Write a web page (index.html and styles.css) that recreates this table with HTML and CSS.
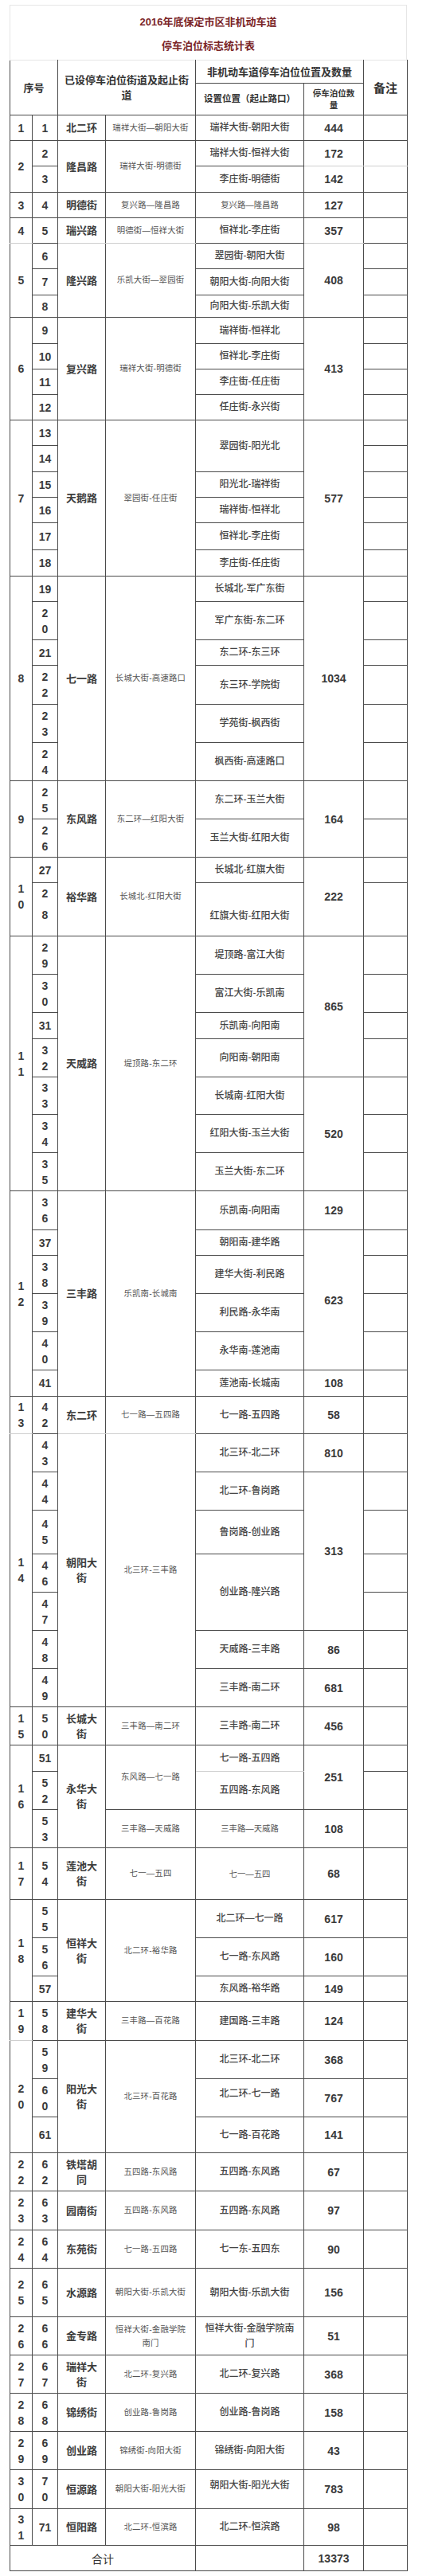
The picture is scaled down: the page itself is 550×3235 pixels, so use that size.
FILE: index.html
```
<!DOCTYPE html>
<html lang="zh-CN">
<head>
<meta charset="utf-8">
<title>2016年底保定市区非机动车道停车泊位标志统计表</title>
<link rel="stylesheet" href="styles.css">
</head>
<body>
<div class="page">
  <div class="title">
    <div class="title-line">2016年底保定市区非机动车道</div>
    <div class="title-line">停车泊位标志统计表</div>
  </div>
  <table class="stats">
    <colgroup>
      <col class="w1"><col class="w2"><col class="w3"><col class="w4"><col class="w5"><col class="w6"><col class="w7">
    </colgroup>
    <thead>
      <tr class="hr1">
        <th colspan="2" rowspan="2" class="hd">序号</th>
        <th colspan="2" rowspan="2" class="hd two">已设停车泊位街道及起止街<br>道</th>
        <th colspan="2" class="hd">非机动车道停车泊位位置及数量</th>
        <th rowspan="2" class="hd big">备注</th>
      </tr>
      <tr class="hr2">
        <th class="hd sub">设置位置（起止路口）</th>
        <th class="hd tiny">停车泊位数<br>量</th>
      </tr>
    </thead>
    <tbody>
      <tr class="h32"><td class="g">1</td><td class="s">1</td><td class="n">北二环</td><td class="r">瑞祥大街—朝阳大街</td><td class="l">瑞祥大街-朝阳大街</td><td class="q">444</td><td class="e"></td></tr>
      <tr class="h32"><td class="g" rowspan="2">2</td><td class="s">2</td><td class="n" rowspan="2">隆昌路</td><td class="r" rowspan="2">瑞祥大街-明德街</td><td class="l">瑞祥大街-恒祥大街</td><td class="q lb">172</td><td class="e lb"></td></tr>
      <tr class="h33"><td class="s">3</td><td class="l">李庄街-明德街</td><td class="q">142</td><td class="e"></td></tr>
      <tr class="h32"><td class="g">3</td><td class="s">4</td><td class="n">明德街</td><td class="r">复兴路—隆昌路</td><td class="l sm">复兴路—隆昌路</td><td class="q">127</td><td class="e"></td></tr>
      <tr class="h32"><td class="g lb">4</td><td class="s">5</td><td class="n lb">瑞兴路</td><td class="r lb">明德街—恒祥大街</td><td class="l">恒祥北-李庄街</td><td class="q lb">357</td><td class="e"></td></tr>
      <tr class="h32"><td class="g" rowspan="3">5</td><td class="s">6</td><td class="n" rowspan="3">隆兴路</td><td class="r" rowspan="3">乐凯大街—翠园街</td><td class="l">翠园街-朝阳大街</td><td class="q" rowspan="3">408</td><td class="e"></td></tr>
      <tr class="h33"><td class="s">7</td><td class="l">朝阳大街-向阳大街</td><td class="e"></td></tr>
      <tr class="h28"><td class="s">8</td><td class="l">向阳大街-乐凯大街</td><td class="e"></td></tr>
      <tr class="h33"><td class="g" rowspan="4">6</td><td class="s">9</td><td class="n" rowspan="4">复兴路</td><td class="r" rowspan="4">瑞祥大街-明德街</td><td class="l">瑞祥街-恒祥北</td><td class="q" rowspan="4">413</td><td class="e"></td></tr>
      <tr class="h32"><td class="s">10</td><td class="l">恒祥北-李庄街</td><td class="e"></td></tr>
      <tr class="h32"><td class="s">11</td><td class="l">李庄街-任庄街</td><td class="e"></td></tr>
      <tr class="h32"><td class="s">12</td><td class="l">任庄街-永兴街</td><td class="e"></td></tr>
      <tr class="h32"><td class="g" rowspan="6">7</td><td class="s">13</td><td class="n" rowspan="6">天鹅路</td><td class="r" rowspan="6">翠园街-任庄街</td><td class="l" rowspan="2">翠园街-阳光北</td><td class="q" rowspan="6">577</td><td class="e"></td></tr>
      <tr class="h33"><td class="s">14</td><td class="e"></td></tr>
      <tr class="h32"><td class="s">15</td><td class="l">阳光北-瑞祥街</td><td class="e"></td></tr>
      <tr class="h32"><td class="s">16</td><td class="l">瑞祥街-恒祥北</td><td class="e"></td></tr>
      <tr class="h34"><td class="s">17</td><td class="l">恒祥北-李庄街</td><td class="e"></td></tr>
      <tr class="h33"><td class="s">18</td><td class="l">李庄街-任庄街</td><td class="e"></td></tr>
      <tr class="h32"><td class="g" rowspan="6">8</td><td class="s">19</td><td class="n" rowspan="6">七一路</td><td class="r" rowspan="6">长城大街-高速路口</td><td class="l">长城北-军广东街</td><td class="q" rowspan="6">1034</td><td class="e"></td></tr>
      <tr class="h48"><td class="s">2<br>0</td><td class="l">军广东街-东二环</td><td class="e"></td></tr>
      <tr class="h32"><td class="s">21</td><td class="l">东二环-东三环</td><td class="e"></td></tr>
      <tr class="h49"><td class="s">2<br>2</td><td class="l">东三环-学院街</td><td class="e"></td></tr>
      <tr class="h48"><td class="s">2<br>3</td><td class="l">学苑街-枫西街</td><td class="e"></td></tr>
      <tr class="h48"><td class="s">2<br>4</td><td class="l">枫西街-高速路口</td><td class="e"></td></tr>
      <tr class="h48"><td class="g" rowspan="2">9</td><td class="s">2<br>5</td><td class="n" rowspan="2">东风路</td><td class="r" rowspan="2">东二环—红阳大街</td><td class="l">东二环-玉兰大街</td><td class="q" rowspan="2">164</td><td class="e"></td></tr>
      <tr class="h48"><td class="s">2<br>6</td><td class="l">玉兰大街-红阳大街</td><td class="e"></td></tr>
      <tr class="h32"><td class="g" rowspan="2">1<br>0</td><td class="s">27</td><td class="n" rowspan="2">裕华路</td><td class="r" rowspan="2">长城北-红阳大街</td><td class="l">长城北-红旗大街</td><td class="q" rowspan="2">222</td><td class="e"></td></tr>
      <tr class="h67"><td class="s tall">2<br>8</td><td class="l low">红旗大街-红阳大街</td><td class="e"></td></tr>
      <tr class="h48"><td class="g" rowspan="7">1<br>1</td><td class="s">2<br>9</td><td class="n" rowspan="7">天威路</td><td class="r" rowspan="7">堤顶路-东二环</td><td class="l">堤顶路-富江大街</td><td class="q" rowspan="4">865</td><td class="e"></td></tr>
      <tr class="h48"><td class="s">3<br>0</td><td class="l">富江大街-乐凯南</td><td class="e"></td></tr>
      <tr class="h33"><td class="s">31</td><td class="l">乐凯南-向阳南</td><td class="e"></td></tr>
      <tr class="h48"><td class="s">3<br>2</td><td class="l">向阳南-朝阳南</td><td class="e"></td></tr>
      <tr class="h47"><td class="s">3<br>3</td><td class="l">长城南-红阳大街</td><td class="q" rowspan="3">520</td><td class="e"></td></tr>
      <tr class="h48"><td class="s">3<br>4</td><td class="l">红阳大街-玉兰大街</td><td class="e"></td></tr>
      <tr class="h48"><td class="s">3<br>5</td><td class="l">玉兰大街-东二环</td><td class="e"></td></tr>
      <tr class="h49"><td class="g" rowspan="6">1<br>2</td><td class="s">3<br>6</td><td class="n" rowspan="6">三丰路</td><td class="r" rowspan="6">乐凯南-长城南</td><td class="l">乐凯南-向阳南</td><td class="q">129</td><td class="e"></td></tr>
      <tr class="h32"><td class="s">37</td><td class="l">朝阳南-建华路</td><td class="q" rowspan="4">623</td><td class="e"></td></tr>
      <tr class="h48"><td class="s">3<br>8</td><td class="l">建华大街-利民路</td><td class="e"></td></tr>
      <tr class="h48"><td class="s">3<br>9</td><td class="l">利民路-永华南</td><td class="e"></td></tr>
      <tr class="h48"><td class="s">4<br>0</td><td class="l">永华南-莲池南</td><td class="e"></td></tr>
      <tr class="h33"><td class="s">41</td><td class="l">莲池南-长城南</td><td class="q">108</td><td class="e"></td></tr>
      <tr class="h47"><td class="g lb">1<br>3</td><td class="s">4<br>2</td><td class="n lb">东二环</td><td class="r lb">七一路—五四路</td><td class="l">七一路-五四路</td><td class="q">58</td><td class="e"></td></tr>
      <tr class="h48"><td class="g" rowspan="7">1<br>4</td><td class="s">4<br>3</td><td class="n" rowspan="7">朝阳大<br>街</td><td class="r" rowspan="7">北三环-三丰路</td><td class="l">北三环-北二环</td><td class="q">810</td><td class="e"></td></tr>
      <tr class="h48"><td class="s">4<br>4</td><td class="l">北二环-鲁岗路</td><td class="q" rowspan="4">313</td><td class="e"></td></tr>
      <tr class="h55"><td class="s">4<br>5</td><td class="l">鲁岗路-创业路</td><td class="e"></td></tr>
      <tr class="h48"><td class="s">4<br>6</td><td class="l" rowspan="2">创业路-隆兴路</td><td class="e"></td></tr>
      <tr class="h48"><td class="s">4<br>7</td><td class="e"></td></tr>
      <tr class="h48"><td class="s">4<br>8</td><td class="l">天威路-三丰路</td><td class="q">86</td><td class="e"></td></tr>
      <tr class="h48"><td class="s">4<br>9</td><td class="l">三丰路-南二环</td><td class="q">681</td><td class="e"></td></tr>
      <tr class="h48"><td class="g">1<br>5</td><td class="s">5<br>0</td><td class="n">长城大<br>街</td><td class="r">三丰路—南二环</td><td class="l">三丰路-南二环</td><td class="q">456</td><td class="e"></td></tr>
      <tr class="h33"><td class="g" rowspan="3">1<br>6</td><td class="s">51</td><td class="n" rowspan="3">永华大<br>街</td><td class="r" rowspan="2">东风路—七一路</td><td class="l lb">七一路-五四路</td><td class="q" rowspan="2">251</td><td class="e"></td></tr>
      <tr class="h48"><td class="s">5<br>2</td><td class="l">五四路-东风路</td><td class="e"></td></tr>
      <tr class="h48"><td class="s">5<br>3</td><td class="r">三丰路—天威路</td><td class="l sm">三丰路—天威路</td><td class="q">108</td><td class="e"></td></tr>
      <tr class="h65"><td class="g">1<br>7</td><td class="s">5<br>4</td><td class="n">莲池大<br>街</td><td class="r">七一—五四</td><td class="l sm">七一—五四</td><td class="q">68</td><td class="e"></td></tr>
      <tr class="h48"><td class="g" rowspan="3">1<br>8</td><td class="s">5<br>5</td><td class="n" rowspan="3">恒祥大<br>街</td><td class="r" rowspan="3">北二环-裕华路</td><td class="l">北二环—七一路</td><td class="q">617</td><td class="e"></td></tr>
      <tr class="h48"><td class="s">5<br>6</td><td class="l">七一路-东风路</td><td class="q">160</td><td class="e"></td></tr>
      <tr class="h32"><td class="s">57</td><td class="l">东风路-裕华路</td><td class="q">149</td><td class="e"></td></tr>
      <tr class="h49"><td class="g lb">1<br>9</td><td class="s">5<br>8</td><td class="n">建华大<br>街</td><td class="r">三丰路—百花路</td><td class="l">建国路-三丰路</td><td class="q">124</td><td class="e"></td></tr>
      <tr class="h48"><td class="g" rowspan="3">2<br>0</td><td class="s">5<br>9</td><td class="n" rowspan="3">阳光大<br>街</td><td class="r" rowspan="3">北三环-百花路</td><td class="l">北三环-北二环</td><td class="q">368</td><td class="e"></td></tr>
      <tr class="h48"><td class="s">6<br>0</td><td class="l up">北二环-七一路</td><td class="q">767</td><td class="e"></td></tr>
      <tr class="h45"><td class="s">61</td><td class="l">七一路-百花路</td><td class="q">141</td><td class="e"></td></tr>
      <tr class="h48"><td class="g">2<br>2</td><td class="s">6<br>2</td><td class="n">铁塔胡<br>同</td><td class="r">五四路-东风路</td><td class="l">五四路-东风路</td><td class="q">67</td><td class="e"></td></tr>
      <tr class="h49"><td class="g">2<br>3</td><td class="s">6<br>3</td><td class="n">园南街</td><td class="r">五四路-东风路</td><td class="l">五四路-东风路</td><td class="q">97</td><td class="e"></td></tr>
      <tr class="h48"><td class="g">2<br>4</td><td class="s">6<br>4</td><td class="n">东苑街</td><td class="r">七一路-五四路</td><td class="l">七一东-五四东</td><td class="q">90</td><td class="e"></td></tr>
      <tr class="h61"><td class="g">2<br>5</td><td class="s">6<br>5</td><td class="n">水源路</td><td class="r">朝阳大街-乐凯大街</td><td class="l">朝阳大街-乐凯大街</td><td class="q">156</td><td class="e"></td></tr>
      <tr class="h48"><td class="g">2<br>6</td><td class="s">6<br>6</td><td class="n">金专路</td><td class="r wrap">恒祥大街-金融学院<br>南门</td><td class="l wrap">恒祥大街-金融学院南<br>门</td><td class="q">51</td><td class="e"></td></tr>
      <tr class="h48"><td class="g">2<br>7</td><td class="s">6<br>7</td><td class="n">瑞祥大<br>街</td><td class="r">北二环-复兴路</td><td class="l">北二环-复兴路</td><td class="q">368</td><td class="e"></td></tr>
      <tr class="h48"><td class="g">2<br>8</td><td class="s">6<br>8</td><td class="n">锦绣街</td><td class="r">创业路-鲁岗路</td><td class="l">创业路-鲁岗路</td><td class="q">158</td><td class="e"></td></tr>
      <tr class="h48"><td class="g">2<br>9</td><td class="s">6<br>9</td><td class="n">创业路</td><td class="r">锦绣街-向阳大街</td><td class="l">锦绣街-向阳大街</td><td class="q">43</td><td class="e"></td></tr>
      <tr class="h49"><td class="g">3<br>0</td><td class="s">7<br>0</td><td class="n">恒源路</td><td class="r">朝阳大街-阳光大街</td><td class="l up">朝阳大街-阳光大街</td><td class="q">783</td><td class="e"></td></tr>
      <tr class="h46"><td class="g">3<br>1</td><td class="s">71</td><td class="n">恒阳路</td><td class="r">北二环-恒滨路</td><td class="l">北二环-恒滨路</td><td class="q">98</td><td class="e"></td></tr>
      <tr class="h32"><td class="sum" colspan="4">合计</td><td class="l"></td><td class="q">13373</td><td class="e"></td></tr>
    </tbody>
  </table>
</div>
</body>
</html>
```

FILE: styles.css
```
* {
  box-sizing: border-box;
}

html,
body {
  margin: 0;
  padding: 0;
  background: #ffffff;
}

body {
  font-family: "Liberation Sans", "Noto Sans CJK SC", sans-serif;
  color: #333333;
}

.page {
  padding: 6px 0 0 12px;
  width: 550px;
}

.title {
  width: 499px;
  border: 1px solid #e6e6e6;
  border-bottom: none;
  padding: 6px 0 2px;
  text-align: center;
}

.title-line {
  line-height: 30px;
  font-size: 13px;
  font-weight: 700;
  color: #7b2628;
}

.stats {
  width: 499px;
  table-layout: fixed;
  border-collapse: collapse;
}

.w1 { width: 28px; }
.w2 { width: 32px; }
.w3 { width: 60px; }
.w4 { width: 113px; }
.w5 { width: 136px; }
.w6 { width: 75px; }
.w7 { width: 55px; }

.stats th,
.stats td {
  border: 1px solid #4b4b4b;
  padding: 0;
  text-align: center;
  vertical-align: middle;
  white-space: nowrap;
  overflow: hidden;
}

.stats thead tr.hr1 th {
  border-top-color: #e6e6e6;
}

.hr1 { height: 29px; }
.hr2 { height: 40px; }

.hd {
  font-size: 13px;
  font-weight: 700;
  color: #333333;
  line-height: 19px;
}

.hd.sub {
  font-size: 11.5px;
}

.hd.tiny {
  font-size: 10.5px;
  line-height: 15px;
}

.hd.big {
  font-size: 15px;
}

.h28 { height: 28px; }
.h32 { height: 32px; }
.h33 { height: 33px; }
.h34 { height: 34px; }
.h45 { height: 45px; }
.h46 { height: 46px; }
.h47 { height: 47px; }
.h48 { height: 48px; }
.h49 { height: 49px; }
.h55 { height: 55px; }
.h61 { height: 61px; }
.h65 { height: 65px; }
.h67 { height: 67px; }

.g,
.s,
.q {
  font-family: "Liberation Sans", "Noto Sans CJK SC", sans-serif;
  font-size: 14px;
  font-weight: 700;
  line-height: 20px;
  color: #3a3a3a;
}

.s.tall {
  line-height: 27px;
  padding-bottom: 12px;
}

.n {
  font-size: 13px;
  font-weight: 700;
  line-height: 19px;
  color: #3d3d3d;
}

.r {
  font-size: 10.4px;
  line-height: 16px;
  color: #555555;
  letter-spacing: 0.2px;
}

.l {
  font-size: 12px;
  font-weight: 500;
  line-height: 19px;
  color: #444444;
}

.l.sm {
  font-size: 10.4px;
  font-weight: 400;
  color: #555555;
}

.l.low {
  padding-top: 16px;
}

.l.up {
  padding-bottom: 10px;
}

.wrap {
  line-height: 17px;
}

.l.wrap {
  line-height: 19px;
}

.lb {
  border-bottom-color: #cfcfcf !important;
}

.sum {
  font-size: 14px;
  color: #333333;
}
```
